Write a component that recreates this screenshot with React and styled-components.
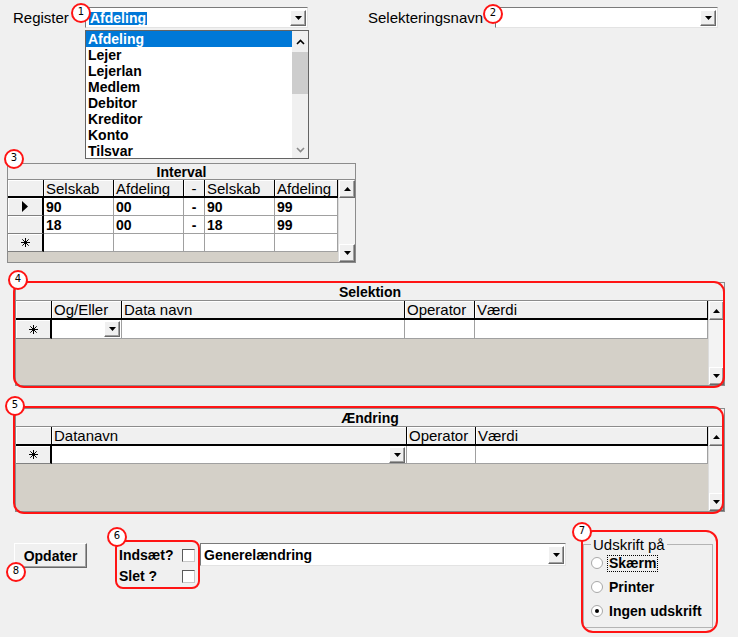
import React from "react";
import styled, { createGlobalStyle } from "styled-components";

const GlobalStyle = createGlobalStyle`
  html, body {
    margin: 0;
    padding: 0;
    background: #f0f0f0;
  }
  body {
    font-family: "Liberation Sans", Arial, sans-serif;
    font-size: 15px;
    color: #000;
  }
  * {
    box-sizing: border-box;
  }
`;

const Page = styled.div`
  position: relative;
  width: 738px;
  height: 637px;
  overflow: hidden;
`;

const TopRow = styled.div`
  display: flex;
  align-items: center;
  height: 21px;
  margin-top: 7px;
  padding-left: 13px;
`;

const Label = styled.span`
  display: inline-block;
  width: ${(p) => p.$w}px;
  margin-left: ${(p) => p.$ml || 0}px;
  font-size: 15px;
  white-space: nowrap;
`;

const ComboBox = styled.div`
  position: relative;
  display: flex;
  align-items: stretch;
  width: ${(p) => p.$w}px;
  height: ${(p) => p.$h || 21}px;
  margin-top: ${(p) => p.$mt || 0}px;
  background: #fff;
  border-style: solid;
  border-width: 1px;
  border-color: #7a7a7a #e3e3e3 #e3e3e3 #7a7a7a;
  padding: 2px 1px 1px 1px;
`;

const ComboText = styled.div`
  flex: 1;
  display: flex;
  align-items: center;
  padding-left: 2px;
  font-weight: bold;
  font-size: 14px;
`;

const Selected = styled.span`
  background: #0078d7;
  color: #fff;
  padding: 0 1px;
  line-height: 13px;
`;

const DropButton = styled.div`
  width: 16px;
  display: flex;
  align-items: center;
  justify-content: center;
  background: #f0f0f0;
  border-style: solid;
  border-width: 1px;
  border-color: #fff #696969 #696969 #fff;
  box-shadow: inset -1px -1px #a0a0a0;
`;

const CellButton = styled(DropButton)`
  width: 16px;
  height: 16px;
  margin: 0 1px 0 auto;
`;

const DownTriangle = () => (
  <svg width="7" height="4" viewBox="0 0 7 4">
    <polygon points="0,0 7,0 3.5,4" fill="#000" />
  </svg>
);

const UpTriangle = () => (
  <svg width="7" height="4" viewBox="0 0 7 4">
    <polygon points="0,4 7,4 3.5,0" fill="#000" />
  </svg>
);

const DropList = styled.div`
  position: absolute;
  top: 22px;
  left: -1px;
  width: 224px;
  height: 129px;
  display: flex;
  background: #fff;
  border: 1px solid #646464;
  z-index: 3;
`;

const ListItems = styled.div`
  flex: 1;
  display: flex;
  flex-direction: column;
`;

const ListItem = styled.div`
  height: 16px;
  line-height: 16px;
  padding-left: 2px;
  font-weight: bold;
  font-size: 14px;
  background: ${(p) => (p.$active ? "#0078d7" : "transparent")};
  color: ${(p) => (p.$active ? "#fff" : "#000")};
`;

const ListScroll = styled.div`
  width: 16px;
  display: flex;
  flex-direction: column;
  background: #f0f0f0;
`;

const ListArrow = styled.div`
  height: ${(p) => p.$h}px;
  display: flex;
  align-items: center;
  justify-content: center;
`;

const ListThumb = styled.div`
  height: 42px;
  margin: 0 0 0 0;
  background: #cdcdcd;
`;

const ListSpacer = styled.div`
  flex: 1;
`;

const Chevron = ({ up, color }) => (
  <svg width="9" height="6" viewBox="0 0 9 6">
    <polyline
      points={up ? "1,5 4.5,1.5 8,5" : "1,1 4.5,4.5 8,1"}
      fill="none"
      stroke={color}
      strokeWidth="1.6"
    />
  </svg>
);

/* ---------- data grids ---------- */

const Section = styled.div`
  margin-top: ${(p) => p.$mt}px;
  margin-left: ${(p) => p.$ml}px;
  width: ${(p) => p.$w}px;
`;

const Annotated = styled.div`
  position: relative;
  &::after {
    content: "";
    position: absolute;
    inset: ${(p) => p.$inset || "0"};
    border: 2px solid #ff1414;
    border-radius: ${(p) => p.$r || 11}px;
    pointer-events: none;
    z-index: 2;
  }
`;

const GridFrame = styled.div`
  display: flex;
  flex-direction: column;
  width: ${(p) => p.$w}px;
  height: ${(p) => p.$h}px;
  border: 1px solid #8c8c8c;
  background: #d4d0c8;
`;

const GridTitle = styled.div`
  height: ${(p) => p.$h}px;
  display: flex;
  align-items: center;
  justify-content: center;
  background: #f0f0f0;
  border-bottom: 1px solid #8c8c8c;
  font-weight: bold;
  font-size: 14px;
`;

const GridBody = styled.div`
  flex: 1;
  display: flex;
  min-height: 0;
`;

const GridCells = styled.div`
  flex: 1;
  display: flex;
  flex-direction: column;
`;

const GridRow = styled.div`
  display: grid;
  grid-template-columns: ${(p) => p.$cols};
  height: ${(p) => p.$h}px;
`;

const HeadCell = styled.div`
  display: flex;
  align-items: center;
  justify-content: ${(p) => (p.$center ? "center" : "flex-start")};
  padding-left: ${(p) => (p.$center ? 0 : 2)}px;
  background: #f0f0f0;
  border-right: 1px solid #000;
  border-bottom: 2px solid #000;
  box-shadow: inset 1px 1px #fff;
  font-size: 15px;
  white-space: nowrap;
  overflow: hidden;
`;

const RowHead = styled.div`
  display: flex;
  align-items: center;
  justify-content: center;
  background: #f0f0f0;
  border-right: 2px solid #000;
  border-bottom: 1px solid #808080;
  box-shadow: inset 1px 1px #fff;
`;

const DataCell = styled.div`
  display: flex;
  align-items: center;
  justify-content: ${(p) => (p.$center ? "center" : "flex-start")};
  padding-left: ${(p) => (p.$center ? 0 : 2)}px;
  background: #fff;
  border-right: 1px solid #a0a0a0;
  border-bottom: 1px solid #a0a0a0;
  font-weight: bold;
  font-size: 14px;
  white-space: nowrap;
  overflow: hidden;
`;

const VScroll = styled.div`
  width: ${(p) => p.$w}px;
  display: flex;
  flex-direction: column;
  background: #f0f0f0;
  border-left: 1px solid #dcdcdc;
`;

const ScrollBtn = styled.div`
  height: ${(p) => p.$h}px;
  display: flex;
  align-items: center;
  justify-content: center;
  background: #f0f0f0;
  border-style: solid;
  border-width: 1px;
  border-color: #fff #696969 #696969 #fff;
  box-shadow: inset -1px -1px #a0a0a0;
`;

const ScrollTrack = styled.div`
  flex: 1;
  background: #f3f3f3;
`;

const CurrentMark = () => (
  <svg width="6" height="11" viewBox="0 0 6 11">
    <polygon points="0,0 6,5.5 0,11" fill="#000" />
  </svg>
);

const NewMark = () => (
  <svg width="9" height="9" viewBox="0 0 9 9">
    <g stroke="#000" strokeWidth="1">
      <line x1="4.5" y1="0" x2="4.5" y2="9" />
      <line x1="0" y1="4.5" x2="9" y2="4.5" />
      <line x1="1.3" y1="1.3" x2="7.7" y2="7.7" />
      <line x1="7.7" y1="1.3" x2="1.3" y2="7.7" />
    </g>
  </svg>
);

function DataGrid({ title, cols, scrollW, width, height, titleH, headH, rowH, rows }) {
  const template = cols.map((c) => c.w + "px").join(" ");
  return (
    <GridFrame $w={width} $h={height}>
      <GridTitle $h={titleH}>{title}</GridTitle>
      <GridBody>
        <GridCells>
          <GridRow $cols={template} $h={headH}>
            {cols.map((c, i) => (
              <HeadCell key={i} $center={c.center}>
                {c.label}
              </HeadCell>
            ))}
          </GridRow>
          {rows.map((r, i) => (
            <GridRow key={i} $cols={template} $h={rowH}>
              <RowHead>
                {r.mark === "current" && <CurrentMark />}
                {r.mark === "new" && <NewMark />}
              </RowHead>
              {cols.slice(1).map((c, j) => (
                <DataCell key={j} $center={c.center}>
                  {r.cells[j]}
                  {c.combo && (
                    <CellButton>
                      <DownTriangle />
                    </CellButton>
                  )}
                </DataCell>
              ))}
            </GridRow>
          ))}
        </GridCells>
        <VScroll $w={scrollW}>
          <ScrollBtn $h={headH}>
            <UpTriangle />
          </ScrollBtn>
          <ScrollTrack />
          <ScrollBtn $h={18}>
            <DownTriangle />
          </ScrollBtn>
        </VScroll>
      </GridBody>
    </GridFrame>
  );
}

/* ---------- bottom controls ---------- */

const BottomRow = styled.div`
  display: flex;
  align-items: flex-start;
  margin-top: 18px;
  padding-left: 14px;
`;

const Button = styled.button`
  width: 73px;
  height: 25px;
  margin-top: 13px;
  padding: 0;
  background: #f0f0f0;
  border-style: solid;
  border-width: 1px;
  border-color: #fff #696969 #696969 #fff;
  box-shadow: inset -1px -1px #a0a0a0;
  font-family: "Liberation Sans", Arial, sans-serif;
  font-weight: bold;
  font-size: 14px;
  color: #000;
`;

const CheckGroup = styled(Annotated)`
  width: 85px;
  height: 49px;
  margin-left: 28px;
  margin-top: 10px;
  padding-top: 7px;
  display: flex;
  flex-direction: column;
  gap: 5px;
`;

const CheckRow = styled.div`
  display: flex;
  align-items: center;
  height: 16px;
  padding-left: 4px;
  font-weight: bold;
  font-size: 14px;
`;

const CheckLabel = styled.span`
  width: 63px;
  white-space: nowrap;
`;

const CheckBox = styled.span`
  width: 13px;
  height: 13px;
  background: #fff;
  border-style: solid;
  border-width: 1px;
  border-color: #5a5a5a #c8c8c8 #c8c8c8 #5a5a5a;
`;

const OutputGroup = styled(Annotated)`
  width: 137px;
  height: 103px;
  margin-left: 15px;
`;

const GroupBox = styled.fieldset`
  width: 130px;
  height: 92px;
  margin: 6px 0 0 2px;
  padding: 0 0 0 7px;
  border: 1px solid #b4b4b4;
`;

const Legend = styled.legend`
  padding: 0 2px;
  font-size: 15px;
  line-height: 17px;
`;

const RadioList = styled.div`
  margin-top: -2px;
  display: flex;
  flex-direction: column;
`;

const RadioRow = styled.div`
  display: flex;
  align-items: center;
  height: 24px;
`;

const Radio = styled.span`
  width: 12px;
  height: 12px;
  border-radius: 50%;
  background: #fff;
  border: 1px solid #a8a8a8;
  display: flex;
  align-items: center;
  justify-content: center;
  &::after {
    content: "";
    width: 4px;
    height: 4px;
    border-radius: 50%;
    background: ${(p) => (p.$on ? "#000" : "transparent")};
  }
`;

const RadioLabel = styled.span`
  margin-left: 4px;
  padding: 0 1px;
  border: 1px dotted ${(p) => (p.$focus ? "#000" : "transparent")};
  font-weight: bold;
  font-size: 14px;
  line-height: 15px;
  white-space: nowrap;
`;

const Badge = styled.div`
  position: absolute;
  left: ${(p) => p.$x - 10}px;
  top: ${(p) => p.$y - 10}px;
  width: 20px;
  height: 20px;
  border: 2px solid #ff1414;
  border-radius: 50%;
  background: #fff;
  display: flex;
  align-items: center;
  justify-content: center;
  font-family: "DejaVu Sans", sans-serif;
  font-size: 10px;
  line-height: 10px;
  padding-bottom: 2px;
  z-index: 5;
`;

const registers = [
  "Afdeling",
  "Lejer",
  "Lejerlan",
  "Medlem",
  "Debitor",
  "Kreditor",
  "Konto",
  "Tilsvar",
];

const intervalCols = [
  { w: 36 },
  { w: 70, label: "Selskab" },
  { w: 70, label: "Afdeling" },
  { w: 21, label: "-", center: true },
  { w: 70, label: "Selskab" },
  { w: 63, label: "Afdeling" },
];

const intervalRows = [
  { mark: "current", cells: ["90", "00", "-", "90", "99"] },
  { mark: null, cells: ["18", "00", "-", "18", "99"] },
  { mark: "new", cells: ["", "", "", "", ""] },
];

const selektionCols = [
  { w: 36 },
  { w: 70, label: "Og/Eller", combo: true },
  { w: 283, label: "Data navn" },
  { w: 70, label: "Operator" },
  { w: 233, label: "Værdi" },
];

const aendringCols = [
  { w: 36 },
  { w: 355, label: "Datanavn", combo: true },
  { w: 69, label: "Operator" },
  { w: 232, label: "Værdi" },
];

const badges = [
  { n: 1, x: 81, y: 13 },
  { n: 2, x: 493, y: 14 },
  { n: 3, x: 14, y: 159 },
  { n: 4, x: 18, y: 280 },
  { n: 5, x: 15, y: 406 },
  { n: 6, x: 117, y: 537 },
  { n: 7, x: 582, y: 532 },
  { n: 8, x: 16, y: 572 },
];

export default function App() {
  return (
    <Page>
      <GlobalStyle />
      <TopRow>
        <Label $w={72}>Register</Label>
        <ComboBox $w={223}>
          <ComboText>
            <Selected>Afdeling</Selected>
          </ComboText>
          <DropButton>
            <DownTriangle />
          </DropButton>
          <DropList>
            <ListItems>
              {registers.map((r, i) => (
                <ListItem key={r} $active={i === 0}>
                  {r}
                </ListItem>
              ))}
            </ListItems>
            <ListScroll>
              <ListArrow $h={21}>
                <Chevron up color="#000" />
              </ListArrow>
              <ListThumb />
              <ListSpacer />
              <ListArrow $h={17}>
                <Chevron color="#8a8a8a" />
              </ListArrow>
            </ListScroll>
          </DropList>
        </ComboBox>
        <Label $w={127} $ml={60}>
          Selekteringsnavn
        </Label>
        <ComboBox $w={223}>
          <ComboText />
          <DropButton>
            <DownTriangle />
          </DropButton>
        </ComboBox>
      </TopRow>

      <Section $mt={135} $ml={7} $w={349}>
        <DataGrid
          title="Interval"
          cols={intervalCols}
          scrollW={17}
          width={349}
          height={100}
          titleH={16}
          headH={18}
          rowH={18}
          rows={intervalRows}
        />
      </Section>

      <Section $mt={19} $ml={15} $w={710}>
        <Annotated $inset="-1px 0 -2px -2px">
          <DataGrid
            title="Selektion"
            cols={selektionCols}
            scrollW={16}
            width={710}
            height={104}
            titleH={18}
            headH={19}
            rowH={19}
            rows={[{ mark: "new", cells: ["", "", "", ""] }]}
          />
        </Annotated>
      </Section>

      <Section $mt={22} $ml={15} $w={710}>
        <Annotated $inset="-2px 1px -2px -2px">
          <DataGrid
            title="Ændring"
            cols={aendringCols}
            scrollW={16}
            width={710}
            height={104}
            titleH={18}
            headH={19}
            rowH={18}
            rows={[{ mark: "new", cells: ["", "", ""] }]}
          />
        </Annotated>
      </Section>

      <BottomRow>
        <Button>Opdater</Button>
        <CheckGroup $r={8}>
          <CheckRow>
            <CheckLabel>Indsæt?</CheckLabel>
            <CheckBox />
          </CheckRow>
          <CheckRow>
            <CheckLabel>Slet ?</CheckLabel>
            <CheckBox />
          </CheckRow>
        </CheckGroup>
        <ComboBox $w={366} $h={23} $mt={13}>
          <ComboText>Generelændring</ComboText>
          <DropButton>
            <DownTriangle />
          </DropButton>
        </ComboBox>
        <OutputGroup $r={12}>
          <GroupBox>
            <Legend>Udskrift på</Legend>
            <RadioList>
              <RadioRow>
                <Radio />
                <RadioLabel $focus>Skærm</RadioLabel>
              </RadioRow>
              <RadioRow>
                <Radio />
                <RadioLabel>Printer</RadioLabel>
              </RadioRow>
              <RadioRow>
                <Radio $on />
                <RadioLabel>Ingen udskrift</RadioLabel>
              </RadioRow>
            </RadioList>
          </GroupBox>
        </OutputGroup>
      </BottomRow>

      {badges.map((b) => (
        <Badge key={b.n} $x={b.x} $y={b.y}>
          {b.n}
        </Badge>
      ))}
    </Page>
  );
}
